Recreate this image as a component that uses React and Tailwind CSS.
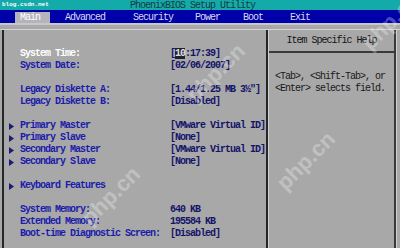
const rows = [
  { label: 'System Time:', value: 'time', selected: true },
  { label: 'System Date:', value: '[02/06/2007]' },
  null,
  { label: 'Legacy Diskette A:', value: '[1.44/1.25 MB  3½"]' },
  { label: 'Legacy Diskette B:', value: '[Disabled]' },
  null,
  { label: 'Primary Master', value: '[VMware Virtual ID]', sub: true },
  { label: 'Primary Slave', value: '[None]', sub: true },
  { label: 'Secondary Master', value: '[VMware Virtual ID]', sub: true },
  { label: 'Secondary Slave', value: '[None]', sub: true },
  null,
  { label: 'Keyboard Features', sub: true },
  null,
  { label: 'System Memory:', value: '640 KB' },
  { label: 'Extended Memory:', value: '195584 KB' },
  { label: 'Boot-time Diagnostic Screen:', value: '[Disabled]' },
];

const Arrow = () => (
  <svg width="5" height="7" viewBox="0 0 5 7" className="block">
    <path d="M0 0 L5 3.5 L0 7 Z" fill="#1a1a78" />
  </svg>
);

const Watermark = ({ className }) => (
  <span
    aria-hidden="true"
    className={`absolute pointer-events-none select-none text-[22px] font-bold text-white/30 -rotate-45 font-['Liberation_Sans',sans-serif] tracking-normal leading-none ${className}`}
  >
    php.cn
  </span>
);

export default function App() {
  return (
    <div className="relative w-[400px] h-[248px] overflow-hidden bg-[#a8a8a8] font-['Liberation_Mono',monospace] text-[10px] tracking-[-1px] leading-[12px] font-bold">
      {/* title bar */}
      <div className="h-[10px] bg-[#14aaaa] flex items-center">
        <span className="w-[130px] pl-[2px] text-[6px] leading-none tracking-normal text-white">
          blog.csdn.net
        </span>
        <span className="text-[#123c3c] font-normal leading-none pt-[1px]">PhoenixBIOS Setup Utility</span>
      </div>

      {/* menu bar */}
      <div className="h-[13px] bg-[#0000a8] flex items-end text-[#d8d8f0] font-normal">
        <span className="ml-[15px] w-[35px] h-[11px] pl-[5px] bg-[#b4b4bc] text-white leading-[11px]">Main</span>
        <span className="w-[68px] pl-[15px] h-[11px] leading-[11px]">Advanced</span>
        <span className="w-[62px] pl-[15px] h-[11px] leading-[11px]">Security</span>
        <span className="w-[48px] pl-[15px] h-[11px] leading-[11px]">Power</span>
        <span className="w-[47px] pl-[15px] h-[11px] leading-[11px]">Boot</span>
        <span className="pl-[15px] h-[11px] leading-[11px]">Exit</span>
      </div>
      <div className="h-[2px] bg-[#c8c8c8]" />

      {/* frame */}
      <div className="mt-[4px] flex border-t border-[#d4d4d4] h-[230px]">
        <div className="ml-[2px] w-[266px] border-l-2 border-r-2 border-[#262626] pt-[18px] overflow-hidden">
          {rows.map((row, i) =>
            row ? (
              <div key={i} className="flex h-[12px] whitespace-nowrap">
                <span className="w-[16px] flex items-center pl-[5px]">{row.sub && <Arrow />}</span>
                <span className={`w-[150px] ${row.selected ? 'text-white' : 'text-[#1c1ca8]'}`}>{row.label}</span>
                <span className="text-[#14146a]">
                  {row.value === 'time' ? (
                    <>
                      [<span className="bg-[#202030] text-[#e0e0e0]">10</span>:17:39]
                    </>
                  ) : (
                    row.value
                  )}
                </span>
              </div>
            ) : (
              <div key={i} className="h-[12px]" />
            )
          )}
        </div>

        <div className="w-[128px] border-l border-[#d0d0d0] border-r-2 border-r-[#3a3a3a] flex flex-col">
          <div className="h-[23px] flex items-center justify-center border-b-2 border-[#3a3a3a] text-[#141414] font-normal">
            Item Specific Help
          </div>
          <div className="pt-[18px] pl-[6px] text-[#181818] font-normal whitespace-nowrap">
            <div>&lt;Tab&gt;, &lt;Shift-Tab&gt;, or</div>
            <div>&lt;Enter&gt; selects field.</div>
          </div>
        </div>
        <div className="w-[1px] bg-[#d0d0d0]" />
      </div>

      <Watermark className="left-[180px] top-[62px]" />
      <Watermark className="left-[75px] top-[185px]" />
      <Watermark className="left-[270px] top-[150px]" />
      <Watermark className="left-[355px] top-[10px]" />
    </div>
  );
}
